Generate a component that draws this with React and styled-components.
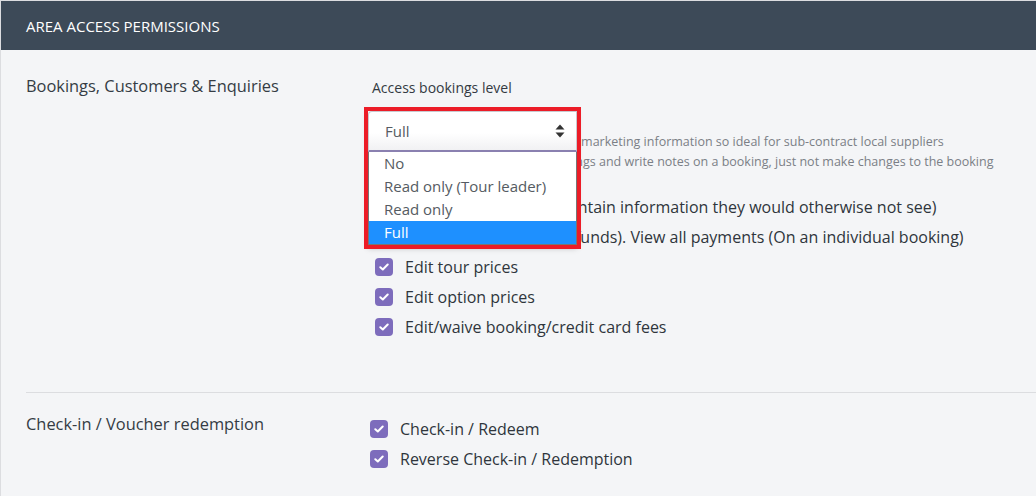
import React from 'react';
import styled, { createGlobalStyle } from 'styled-components';

const GlobalStyle = createGlobalStyle`
  html, body {
    margin: 0;
    padding: 0;
    background: #f4f5f7;
    font-family: "Open Sans", "Noto Sans", sans-serif;
    color: #333a42;
  }
`;

const bookingOptions = ['No', 'Read only (Tour leader)', 'Read only', 'Full'];

const bookingPerms = [
  'Customer data (may contain information they would otherwise not see)',
  'Take payments (and refunds). View all payments (On an individual booking)',
  'Edit tour prices',
  'Edit option prices',
  'Edit/waive booking/credit card fees',
];

const checkinPerms = ['Check-in / Redeem', 'Reverse Check-in / Redemption'];

function CheckIcon() {
  return (
    <svg width="10" height="8" viewBox="0 0 10 8">
      <path d="M1.3 4.2 L3.8 6.5 L8.7 1.5" fill="none" stroke="#fff" strokeWidth="2" strokeLinecap="round" strokeLinejoin="round" />
    </svg>
  );
}

function SortIcon() {
  return (
    <svg width="10" height="14" viewBox="0 0 10 14">
      <path d="M5 0.5 L9.5 5.5 L0.5 5.5 Z" fill="#333" />
      <path d="M5 13.5 L9.5 8.5 L0.5 8.5 Z" fill="#333" />
    </svg>
  );
}

function Permission({ label }) {
  return (
    <CheckRow>
      <Box><CheckIcon /></Box>
      <span>{label}</span>
    </CheckRow>
  );
}

export default function App() {
  return (
    <>
      <GlobalStyle />
      <Panel>
        <Header>Area access permissions</Header>

        <Section top={26} bottom={50}>
          <AreaLabel>Bookings, Customers &amp; Enquiries</AreaLabel>
          <Column>
            <FieldLabel>Access bookings level</FieldLabel>
            <SelectSpace />
            <Hint>Tour leader: hides all customer and marketing information so ideal for sub-contract local suppliers</Hint>
            <Hint>Read only: see and search all bookings and write notes on a booking, just not make changes to the booking</Hint>
            <CheckList indent={6} top={20}>
              {bookingPerms.map(p => <Permission key={p} label={p} />)}
            </CheckList>

            <Popup>
              <SelectFace>
                <span>Full</span>
                <SortIcon />
              </SelectFace>
              <OptionList>
                {bookingOptions.map(o => (
                  <Option key={o} selected={o === 'Full'}>{o}</Option>
                ))}
              </OptionList>
            </Popup>
          </Column>
        </Section>

        <Divider />

        <Section top={21} bottom={30}>
          <AreaLabel>Check-in / Voucher redemption</AreaLabel>
          <Column>
            <CheckList indent={1} top={0}>
              {checkinPerms.map(p => <Permission key={p} label={p} />)}
            </CheckList>
          </Column>
        </Section>
      </Panel>
    </>
  );
}

const Panel = styled.div`
  border-left: 1px solid #dcdde0;
  border-top: 1px solid #dcdde0;
  min-height: 495px;
  overflow: hidden;
`;

const Header = styled.div`
  height: 49px;
  background: #3d4a58;
  color: #ffffff;
  display: flex;
  align-items: center;
  padding-left: 25px;
  font-size: 15px;
  font-weight: 500;
  text-transform: uppercase;
`;

const Section = styled.div`
  display: grid;
  grid-template-columns: 343px 1fr;
  padding: ${p => p.top}px 0 ${p => p.bottom}px 25px;
`;

const AreaLabel = styled.div`
  font-size: 16.4px;
  line-height: 20px;
  color: #353c44;
`;

const Column = styled.div`
  position: relative;
  min-width: 0;
`;

const FieldLabel = styled.div`
  font-size: 14px;
  line-height: 18px;
  margin-top: 3px;
  padding-left: 3px;
  color: #333a42;
`;

const SelectSpace = styled.div`
  height: 35px;
`;

const Hint = styled.div`
  font-size: 12.5px;
  line-height: 20px;
  color: #7b7f86;
  padding-left: 3px;
  white-space: nowrap;
`;

const CheckList = styled.div`
  display: flex;
  flex-direction: column;
  margin-top: ${p => p.top}px;
  padding-left: ${p => p.indent}px;
`;

const CheckRow = styled.div`
  display: flex;
  align-items: center;
  gap: 12px;
  height: 30px;
  font-size: 16px;
  color: #2f353c;
  white-space: nowrap;
`;

const Box = styled.span`
  width: 18px;
  height: 18px;
  border-radius: 4px;
  background: #7d6cbc;
  display: flex;
  align-items: center;
  justify-content: center;
  flex-shrink: 0;
`;

const Popup = styled.div`
  position: absolute;
  top: 35px;
  left: -1px;
  width: 209px;
  outline: 4px solid #ec1c27;
  box-shadow: 0 3px 6px rgba(0, 0, 0, 0.25);
  z-index: 2;
`;

const SelectFace = styled.div`
  height: 41px;
  box-sizing: border-box;
  display: flex;
  align-items: center;
  justify-content: space-between;
  padding: 0 11px 0 16px;
  background: linear-gradient(#ffffff 55%, #f1f1f3);
  border: 1px solid #c9c9cf;
  border-bottom: 2px solid #8a80b0;
  border-radius: 4px 0 0 0;
  font-size: 15px;
  color: #555b62;
`;

const OptionList = styled.div`
  background: #ffffff;
  border: 1px solid #767676;
  border-top: none;
`;

const Option = styled.div`
  height: 23px;
  line-height: 23px;
  padding-left: 15px;
  font-size: 15px;
  color: ${p => (p.selected ? '#ffffff' : '#555b62')};
  background: ${p => (p.selected ? '#1e90ff' : 'transparent')};
`;

const Divider = styled.div`
  height: 1px;
  background: #dcdde0;
  margin-left: 25px;
`;
